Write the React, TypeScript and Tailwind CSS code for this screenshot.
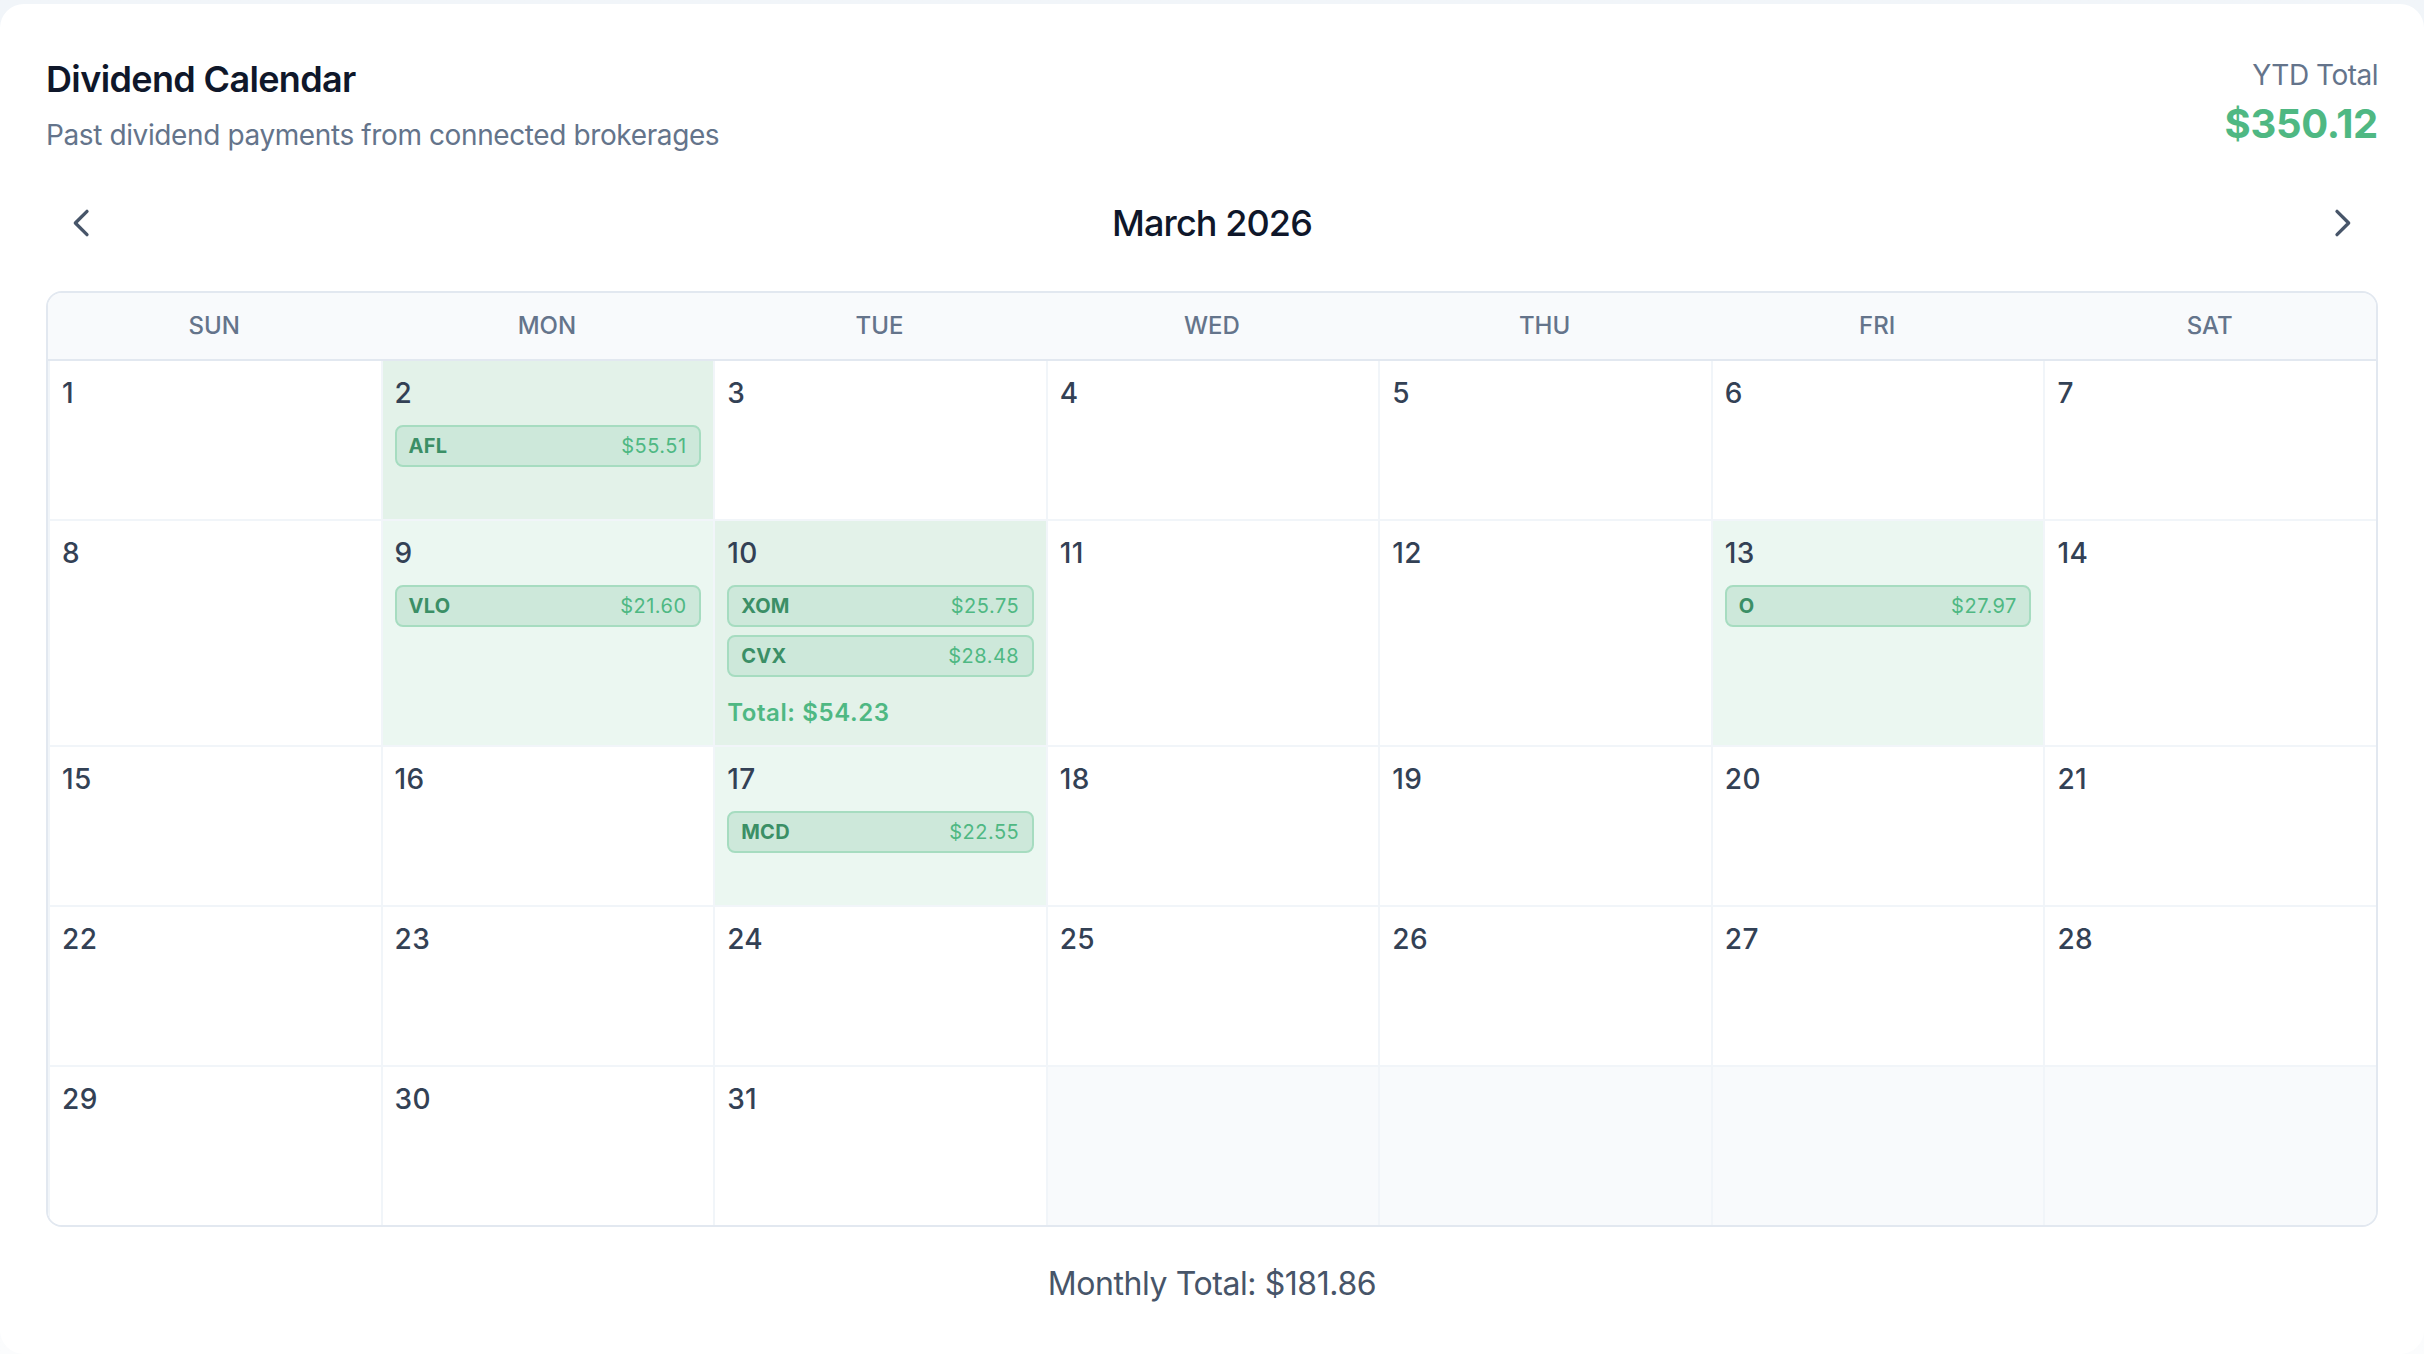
const days: { d?: number; tone?: "strong" | "light"; items?: [string, string][]; total?: string }[] = [
  { d: 1 },
  { d: 2, tone: "strong", items: [["AFL", "$55.51"]] },
  { d: 3 }, { d: 4 }, { d: 5 }, { d: 6 }, { d: 7 },
  { d: 8 },
  { d: 9, tone: "light", items: [["VLO", "$21.60"]] },
  { d: 10, tone: "strong", items: [["XOM", "$25.75"], ["CVX", "$28.48"]], total: "Total: $54.23" },
  { d: 11 }, { d: 12 },
  { d: 13, tone: "light", items: [["O", "$27.97"]] },
  { d: 14 }, { d: 15 }, { d: 16 },
  { d: 17, tone: "light", items: [["MCD", "$22.55"]] },
  { d: 18 }, { d: 19 }, { d: 20 }, { d: 21 }, { d: 22 }, { d: 23 }, { d: 24 }, { d: 25 }, { d: 26 }, { d: 27 }, { d: 28 },
  { d: 29 }, { d: 30 }, { d: 31 }, {}, {}, {}, {},
];

const names = ["SUN", "MON", "TUE", "WED", "THU", "FRI", "SAT"];

function Cell({ c, i }: { c: (typeof days)[number]; i: number }) {
  const bg = c.d === undefined ? "bg-[#f8fafc]" : c.tone === "strong" ? "bg-[#e3f2e9]" : c.tone === "light" ? "bg-[#ebf7f1]" : "bg-white";
  const lastRow = i >= 28;
  return (
    <div className={`p-3 border-l-2 border-[#f1f5f9] ${bg} ${lastRow ? "min-h-[158px]" : "min-h-[160px] border-b-2"}`}>
      {c.d !== undefined && <div className="text-[28px] leading-10 font-medium tracking-[0.4px] text-[#334155]">{c.d}</div>}
      {c.items && (
        <div className="mt-3 flex flex-col gap-2">
          {c.items.map(([t, v]) => (
            <div key={t} className="h-[42px] flex items-center justify-between pl-3 pr-[12.5px] rounded-[8px] border-2 border-[#a6dcc0] bg-[#cde8da] text-[20px] leading-7">
              <span className="font-bold tracking-[0.3px] text-[#3b8f66]">{t}</span>
              <span className="tracking-[0.5px] text-[#4fb883]">{v}</span>
            </div>
          ))}
        </div>
      )}
      {c.total && <div className="mt-[20px] mb-[4px] text-[24px] leading-8 font-semibold tracking-[0.6px] text-[#4fb883]">{c.total}</div>}
    </div>
  );
}

export default function App() {
  return (
    <div className="min-h-screen bg-linear-to-b from-[#f1f5f9] to-[#fbfcfd] pt-1 font-['Inter',sans-serif]">
      <div className="min-h-[1350px] bg-white rounded-[24px] px-[46px] pt-[47px]">
        <div className="flex justify-between items-start">
          <div>
            <h1 className="text-[36px] leading-[56px] font-semibold tracking-[-0.64px] text-[#0f172a]">Dividend Calendar</h1>
            <p className="text-[28px] leading-10 tracking-[-0.39px] text-[#64748b] mt-2">Past dividend payments from connected brokerages</p>
          </div>
          <div className="text-right mt-[4px]">
            <div className="text-[28px] leading-10 tracking-[-0.5px] text-[#64748b]">YTD Total</div>
            <div className="text-[40px] leading-[56px] font-bold tracking-[-0.3px] text-[#4fb883] mt-px">$350.12</div>
          </div>
        </div>
        <div className="flex items-center justify-between mt-[32px]">
          <button className="p-4 text-[#475569]">
            <svg width="40" height="40" viewBox="0 0 24 24" fill="none" stroke="currentColor" strokeWidth="2" strokeLinecap="round" strokeLinejoin="round"><path d="M15 19l-7-7 7-7" /></svg>
          </button>
          <h2 className="text-[36px] leading-[56px] font-medium tracking-[-0.9px] text-[#0f172a]">March 2026</h2>
          <button className="p-4 text-[#475569]">
            <svg width="40" height="40" viewBox="0 0 24 24" fill="none" stroke="currentColor" strokeWidth="2" strokeLinecap="round" strokeLinejoin="round"><path d="M9 5l7 7-7 7" /></svg>
          </button>
        </div>
        <div className="mt-[32px] border-2 border-[#e2e8f0] rounded-[16px] overflow-hidden">
          <div className="grid grid-cols-7 bg-[#f8fafc] border-b-2 border-[#e2e8f0]">
            {names.map((n) => (
              <div key={n} className="h-[66px] flex items-center justify-center text-[24px] font-medium text-[#64748b]">{n}</div>
            ))}
          </div>
          <div className="grid grid-cols-7">
            {days.map((c, i) => (
              <Cell key={i} c={c} i={i} />
            ))}
          </div>
        </div>
        <div className="mt-[33px] text-center text-[32px] leading-12 tracking-[-0.42px] text-[#475569]">Monthly Total: $181.86</div>
      </div>
    </div>
  );
}
